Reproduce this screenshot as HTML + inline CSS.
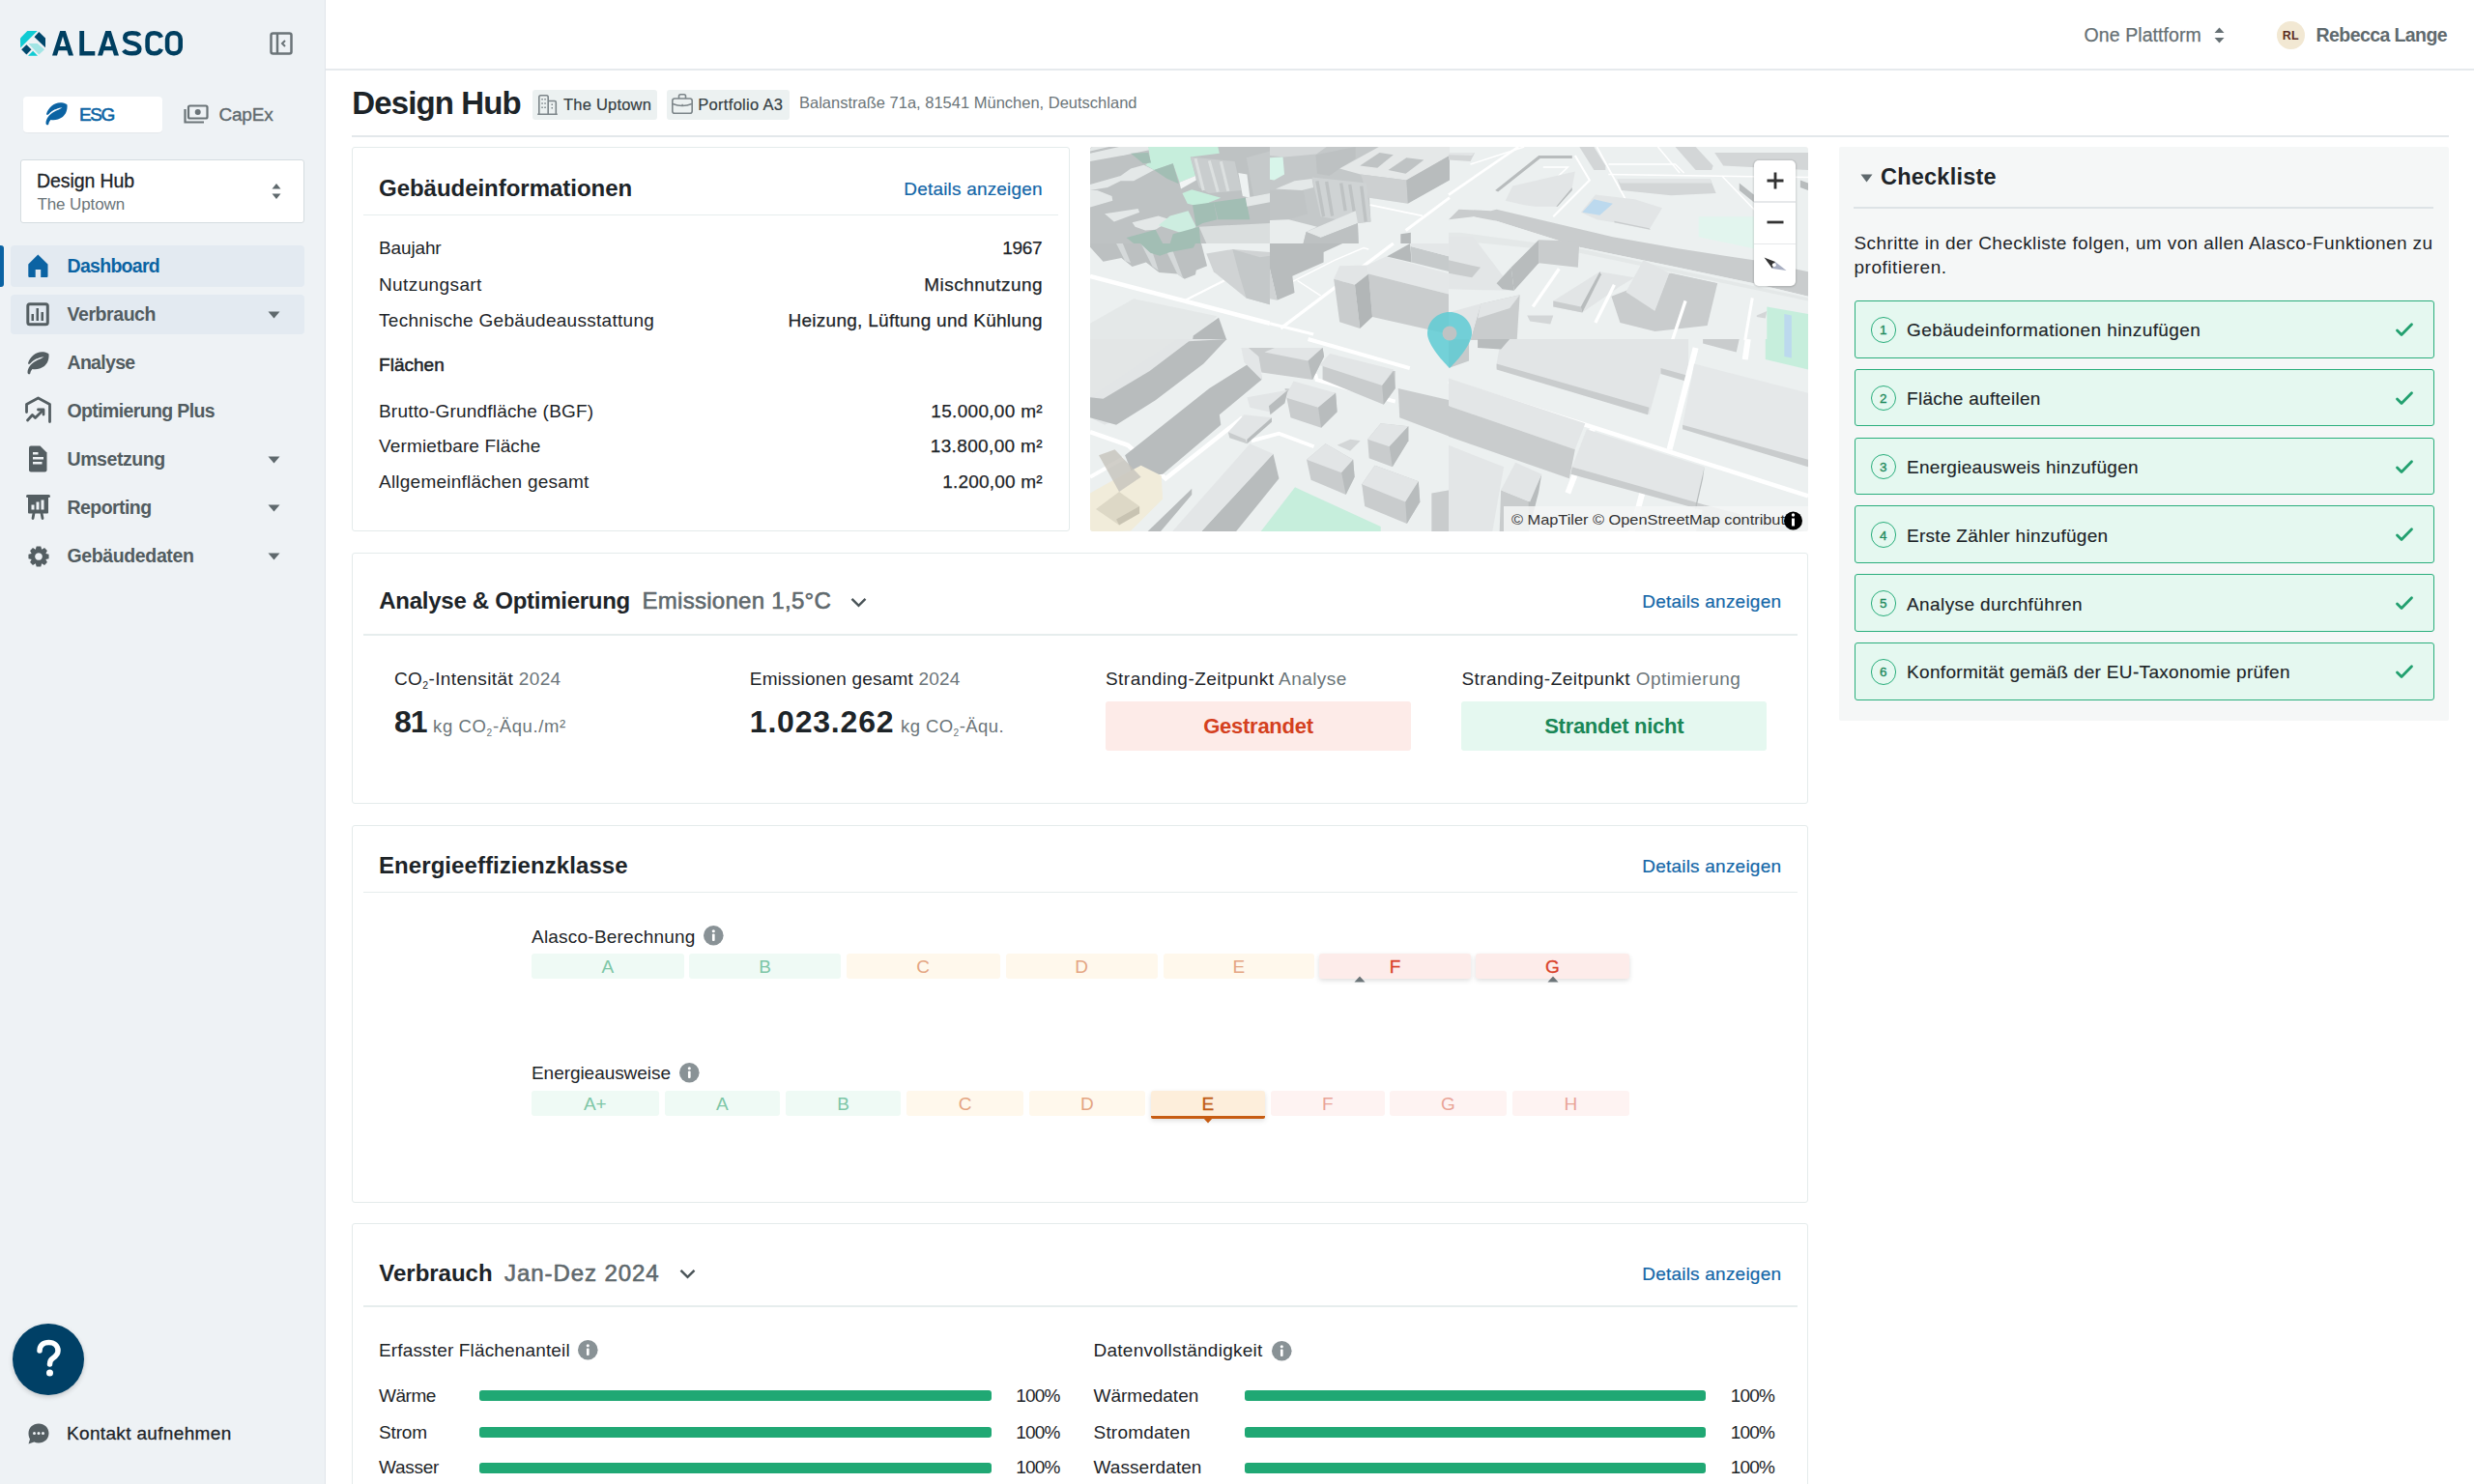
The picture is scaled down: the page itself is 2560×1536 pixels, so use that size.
<!DOCTYPE html>
<html><head><meta charset="utf-8"><style>
html,body{margin:0;padding:0;}
body{width:2560px;height:1536px;overflow:hidden;position:relative;background:#fff;font-family:"Liberation Sans",sans-serif;}
.t{position:absolute;line-height:1;white-space:nowrap;}
svg{position:absolute;overflow:visible;}
sub{font-size:0.55em;vertical-align:-0.35em;line-height:0;}
</style></head><body>
<div style="position:absolute;left:0px;top:0px;width:337px;height:1536px;background:#EEF2F5;border-right:1px solid #E1E6EA;box-sizing:border-box;"></div>
<svg style="left:21px;top:32px" width="26" height="26" viewBox="0 0 26 26">
<polygon points="0,7.5 7.3,0 17.7,0 0.2,17.5" fill="#10CBD3"/>
<polygon points="19.3,1 26,7.6 26,17.3 14.5,6.2" fill="#00486C"/>
<polygon points="8.3,13.1 17.7,13.1 25,19.3 19.3,24.5" fill="#A2E5E5"/>
<polygon points="6.4,14.2 11.5,19.3 6.4,24.4 1.2,19.3" fill="#00486C"/>
<polygon points="13.1,20.8 18,25.8 8,25.8" fill="#10CBD3"/>
</svg>
<svg style="left:54px;top:32px" width="136" height="26" viewBox="0 0 136 26"><g fill="#003F60" fill-rule="evenodd"><path d="M0 25.5 L8.2 0 H13.8 L22 25.5 H17 L15.4 20.3 H6.6 L5 25.5 Z M7.9 16 H14.1 L11 5.8 Z"/><path d="M47 25.5 L55.2 0 H60.8 L69 25.5 H64 L62.4 20.3 H53.6 L52 25.5 Z M54.9 16 H61.1 L58 5.8 Z"/><path d="M28.3 0 H33.1 V21 H44.3 V25.5 H28.3 Z"/></g><g fill="none" stroke="#003F60" stroke-width="4.6"><path d="M90.2 5 C88.8 2.2 86 2.3 82.5 2.3 C78.5 2.3 75.3 3.8 75.3 7.2 C75.3 10.6 78.3 11.6 82.5 12.6 C87.2 13.7 90.3 15 90.3 18.8 C90.3 22.5 87.2 23.3 82.5 23.3 C78.5 23.3 75.8 22.6 74 20"/><path d="M112.8 6.8 C111.6 3.4 109.2 2.3 105.6 2.3 C100.8 2.3 98.6 4.5 98.6 9 V16.6 C98.6 21.1 100.8 23.3 105.6 23.3 C109.2 23.3 111.6 22.1 112.8 18.7"/><rect x="119.1" y="2.3" width="13.6" height="21" rx="6.2"/></g></svg>
<svg style="left:279px;top:33px" width="25" height="24" viewBox="0 0 25 24"><rect x="1.5" y="1.5" width="21" height="21" rx="2" fill="none" stroke="#6B7478" stroke-width="2.5"/><line x1="8" y1="2" x2="8" y2="22" stroke="#6B7478" stroke-width="2.5"/><polyline points="16,9 13,12 16,15" fill="none" stroke="#6B7478" stroke-width="2"/></svg>
<div style="position:absolute;left:24px;top:100px;width:144px;height:37px;background:#fff;border-radius:4px;box-shadow:0 1px 1px rgba(0,0,0,0.04);"></div>
<svg style="left:45.5px;top:106px" width="25" height="25" viewBox="0 0 25 25"><path d="M1.5 21.5 C1.5 17 5 12.5 9.5 10 C13 8 17 6.5 18.5 5.5 C15 5.5 9 7.5 6 10.5 C4 12.5 2.8 14 2 12 C4 5.5 9.5 0.5 16.5 0.3 C20 0.2 23.5 2 23.5 2.5 C24 8 22 15 14 17.5 C11.5 18.3 9 18.5 6.5 18 C5 19.5 4.5 21 4.3 22.5 C4 24 1.5 23.5 1.5 21.5 Z" fill="#0B63A3"/></svg>
<div id="t0" class="t" style="top:109.4px;font-size:19px;color:#0B63A3;letter-spacing:-1.38px;-webkit-text-stroke:0.55px #0B63A3;left:82.0px;">ESG</div>
<svg style="left:190px;top:108px" width="26" height="20" viewBox="0 0 26 20"><rect x="5" y="1.5" width="19.5" height="13" rx="1.5" fill="none" stroke="#6B7478" stroke-width="2.2"/><circle cx="14.7" cy="8" r="3" fill="#6B7478"/><path d="M1.5 5 V18.5 H21" fill="none" stroke="#6B7478" stroke-width="2.2"/></svg>
<div id="t1" class="t" style="top:109.4px;font-size:19px;color:#5F696D;letter-spacing:-0.21px;-webkit-text-stroke:0.35px #5F696D;left:226.5px;">CapEx</div>
<div style="position:absolute;left:21px;top:165px;width:294px;height:66px;background:#fff;border:1px solid #D5DCE0;border-radius:3px;box-sizing:border-box;"></div>
<div id="t2" class="t" style="top:177.5px;font-size:19.5px;color:#1D2428;letter-spacing:-0.09px;-webkit-text-stroke:0.3px #1D2428;left:38.0px;">Design Hub</div>
<div id="t3" class="t" style="top:202.6px;font-size:17px;color:#6B7579;letter-spacing:-0.11px;left:38.5px;">The Uptown</div>
<svg style="left:281px;top:189px" width="10" height="18" viewBox="0 0 10 18"><polygon points="5,1 9.5,6.5 0.5,6.5" fill="#5F696D"/><polygon points="5,17 9.5,11.5 0.5,11.5" fill="#5F696D"/></svg>
<div style="position:absolute;left:11px;top:254px;width:304px;height:43px;background:#E3EAF1;border-radius:4px;"></div>
<div style="position:absolute;left:0px;top:254px;width:4px;height:43px;background:#0B63A3;border-radius:0 3px 3px 0;"></div>
<div style="position:absolute;left:11px;top:305px;width:304px;height:41px;background:#E3EAF1;border-radius:4px;"></div>
<div id="t4" class="t" style="top:265.5px;font-size:19.5px;color:#0B63A3;font-weight:700;letter-spacing:-0.7px;left:69.5px;">Dashboard</div>
<div id="t5" class="t" style="top:315.5px;font-size:19.5px;color:#525C60;font-weight:700;letter-spacing:-0.43px;left:69.5px;">Verbrauch</div>
<div id="t6" class="t" style="top:365.5px;font-size:19.5px;color:#525C60;font-weight:700;letter-spacing:-0.69px;left:69.5px;">Analyse</div>
<div id="t7" class="t" style="top:415.5px;font-size:19.5px;color:#525C60;font-weight:700;letter-spacing:-0.63px;left:69.5px;">Optimierung Plus</div>
<div id="t8" class="t" style="top:465.5px;font-size:19.5px;color:#525C60;font-weight:700;letter-spacing:-0.43px;left:69.5px;">Umsetzung</div>
<div id="t9" class="t" style="top:515.5px;font-size:19.5px;color:#525C60;font-weight:700;letter-spacing:-0.56px;left:69.5px;">Reporting</div>
<div id="t10" class="t" style="top:565.5px;font-size:19.5px;color:#525C60;font-weight:700;letter-spacing:-0.37px;left:69.5px;">Gebäudedaten</div>
<svg style="left:277px;top:322px" width="13" height="8" viewBox="0 0 13 8"><polygon points="0.5,0.5 12.5,0.5 6.5,7.5" fill="#5F696D"/></svg>
<svg style="left:277px;top:472px" width="13" height="8" viewBox="0 0 13 8"><polygon points="0.5,0.5 12.5,0.5 6.5,7.5" fill="#5F696D"/></svg>
<svg style="left:277px;top:522px" width="13" height="8" viewBox="0 0 13 8"><polygon points="0.5,0.5 12.5,0.5 6.5,7.5" fill="#5F696D"/></svg>
<svg style="left:277px;top:572px" width="13" height="8" viewBox="0 0 13 8"><polygon points="0.5,0.5 12.5,0.5 6.5,7.5" fill="#5F696D"/></svg>
<svg style="left:29px;top:263px" width="21" height="24" viewBox="0 0 21 24"><path d="M10.3 0.5 L20.5 10.5 V23 Q20.5 24 19.5 24 H13.2 V16 H7.7 V24 H1.5 Q0.3 24 0.3 23 V10.5 Z" fill="#0B63A3"/></svg>
<svg style="left:27px;top:313px" width="25" height="25" viewBox="0 0 25 25"><rect x="1.8" y="1.8" width="20.5" height="21" rx="2" fill="none" stroke="#545E62" stroke-width="3"/><rect x="5.5" y="12" width="2.5" height="7" fill="#545E62"/><rect x="10.5" y="6" width="2.5" height="13" fill="#545E62"/><rect x="15.5" y="10" width="2.5" height="9" fill="#545E62"/></svg>
<svg style="left:27px;top:364px" width="25" height="25" viewBox="0 0 25 25"><path d="M1.5 21.5 C1.5 17 5 12.5 9.5 10 C13 8 17 6.5 18.5 5.5 C15 5.5 9 7.5 6 10.5 C4 12.5 2.8 14 2 12 C4 5.5 9.5 0.5 16.5 0.3 C20 0.2 23.5 2 23.5 2.5 C24 8 22 15 14 17.5 C11.5 18.3 9 18.5 6.5 18 C5 19.5 4.5 21 4.3 22.5 C4 24 1.5 23.5 1.5 21.5 Z" fill="#545E62"/></svg>
<svg style="left:26px;top:411px" width="28" height="28" viewBox="0 0 28 28"><polyline points="1.5,15.5 1.5,7.5 13.5,1 25.5,7.5 25.5,25.5" fill="none" stroke="#545E62" stroke-width="2.8" stroke-linecap="round" stroke-linejoin="round"/><polyline points="2.5,24 7.5,18.5 10.5,21.5 18,14" fill="none" stroke="#545E62" stroke-width="2.8" stroke-linecap="round" stroke-linejoin="round"/><polyline points="13.5,13 19,13 19,18" fill="none" stroke="#545E62" stroke-width="2.8" stroke-linecap="round" stroke-linejoin="round"/></svg>
<svg style="left:30px;top:461px" width="19" height="28" viewBox="0 0 19 28"><path d="M2 0.5 H11.5 L18.5 7.5 V25.5 Q18.5 27.5 16.5 27.5 H2 Q0 27.5 0 25.5 V2.5 Q0 0.5 2 0.5 Z" fill="#545E62"/><rect x="4" y="7" width="5.5" height="2.5" fill="#EEF2F5"/><rect x="4" y="12" width="11" height="2.5" fill="#EEF2F5"/><rect x="4" y="17" width="9.5" height="2.5" fill="#EEF2F5"/></svg>
<svg style="left:27px;top:512px" width="26" height="26" viewBox="0 0 26 26"><rect x="0" y="0" width="25" height="3" rx="1.5" fill="#545E62"/><rect x="2" y="1" width="21" height="18.5" rx="1" fill="#545E62"/><rect x="5.5" y="10.5" width="3" height="5" fill="#EEF2F5"/><rect x="10.5" y="7.5" width="3" height="8" fill="#EEF2F5"/><rect x="15.5" y="5.5" width="3" height="10" fill="#EEF2F5"/><path d="M8 19 L7 24.5 M16 19 L17 24.5" stroke="#545E62" stroke-width="2.8" stroke-linecap="round"/></svg>
<svg style="left:28.5px;top:564.5px" width="22" height="22" viewBox="0 0 24 24"><path fill="#545E62" fill-rule="evenodd" d="M9.5 0.5 H14.5 L15.5 4 L18.6 2.3 L21.7 5.4 L20 8.6 L23.5 9.5 V14.5 L20 15.4 L21.7 18.6 L18.6 21.7 L15.5 20 L14.5 23.5 H9.5 L8.5 20 L5.4 21.7 L2.3 18.6 L4 15.4 L0.5 14.5 V9.5 L4 8.6 L2.3 5.4 L5.4 2.3 L8.5 4 Z M12 7.8 A4.2 4.2 0 1 0 12.001 7.8 Z"/></svg>
<div style="position:absolute;left:13px;top:1370px;width:74px;height:74px;border-radius:50%;background:#004066;box-shadow:0 2px 5px rgba(0,0,0,0.18);"></div>
<svg style="left:37px;top:1388px" width="27" height="38" viewBox="0 0 27 38"><path d="M4 10 C4 4.5 8 1.5 13.5 1.5 C19 1.5 23 5 23 10 C23 14 20.5 16 17.5 18 C15.3 19.5 14.5 21 14.5 24" fill="none" stroke="#fff" stroke-width="5.5" stroke-linecap="round"/><circle cx="14.5" cy="33" r="3.5" fill="#fff"/></svg>
<svg style="left:28.5px;top:1473px" width="22" height="22" viewBox="0 0 22 22"><path d="M11 0.5 C17 0.5 21.5 4.7 21.5 10.5 C21.5 16.3 17 20.5 11 20.5 C9.3 20.5 7.7 20.2 6.3 19.6 L0.5 21.5 L2 16.5 C1 14.9 0.5 12.8 0.5 10.5 C0.5 4.7 5 0.5 11 0.5 Z" fill="#545E62"/><circle cx="6.5" cy="10.5" r="1.5" fill="#EEF2F5"/><circle cx="11" cy="10.5" r="1.5" fill="#EEF2F5"/><circle cx="15.5" cy="10.5" r="1.5" fill="#EEF2F5"/></svg>
<div id="t11" class="t" style="top:1474.4px;font-size:19px;color:#1D2428;letter-spacing:0.34px;-webkit-text-stroke:0.3px #1D2428;left:69.0px;">Kontakt aufnehmen</div>
<div style="position:absolute;left:337px;top:71px;width:2223px;height:2px;background:#E6EAED;"></div>
<div id="t12" class="t" style="top:26.5px;font-size:19.5px;color:#667074;letter-spacing:0.08px;-webkit-text-stroke:0.25px #667074;left:2156.6px;">One Plattform</div>
<svg style="left:2291px;top:28px" width="11" height="17" viewBox="0 0 11 17"><polygon points="5.5,0.5 10.5,6 0.5,6" fill="#667074"/><polygon points="5.5,16.5 10.5,11 0.5,11" fill="#667074"/></svg>
<div style="position:absolute;left:2356px;top:22px;width:28.5px;height:29px;border-radius:50%;background:#F2E8D3;"></div>
<div id="t13" class="t" style="top:30.6px;font-size:12.5px;color:#5B2B1F;font-weight:700;left:2370.2px;transform:translateX(-50%);">RL</div>
<div id="t14" class="t" style="top:26.5px;font-size:19.5px;color:#5F6A6E;font-weight:700;letter-spacing:-0.59px;left:2396.6px;">Rebecca Lange</div>
<div id="t15" class="t" style="top:90.1px;font-size:33px;color:#1D2428;font-weight:700;letter-spacing:-0.88px;left:364.3px;">Design Hub</div>
<div style="position:absolute;left:551px;top:93px;width:129px;height:31px;background:#ECF1F1;border-radius:3px;"></div>
<svg style="left:556px;top:98px" width="21" height="21" viewBox="0 0 21 21"><path d="M1.8 20 V2.5 Q1.8 0.8 3.5 0.8 H9.5 Q11.2 0.8 11.2 2.5 V20 M11.2 6.5 H18 Q19.3 6.5 19.3 8 V20 M0.2 20.2 H20.8" fill="none" stroke="#7C8589" stroke-width="1.6"/><g fill="#7C8589"><rect x="4.3" y="4" width="1.5" height="1.5"/><rect x="7.3" y="4" width="1.5" height="1.5"/><rect x="4.3" y="8.3" width="1.5" height="1.5"/><rect x="7.3" y="8.3" width="1.5" height="1.5"/><rect x="4.3" y="12.5" width="1.5" height="1.5"/><rect x="7.3" y="12.5" width="1.5" height="1.5"/><rect x="14.5" y="9.5" width="1.5" height="1.5"/><rect x="14.5" y="13" width="1.5" height="1.5"/></g></svg>
<div id="t16" class="t" style="top:100.0px;font-size:16.5px;color:#353E42;letter-spacing:0.2px;-webkit-text-stroke:0.2px #353E42;left:583.1px;">The Uptown</div>
<div style="position:absolute;left:690px;top:93px;width:126.5px;height:31px;background:#ECF1F1;border-radius:3px;"></div>
<svg style="left:695px;top:97px" width="22" height="21" viewBox="0 0 22 21"><rect x="0.8" y="5" width="20.4" height="15.2" rx="2.3" fill="none" stroke="#7C8589" stroke-width="1.6"/><path d="M7.5 5 V2.5 Q7.5 0.8 9.2 0.8 H12.8 Q14.5 0.8 14.5 2.5 V5" fill="none" stroke="#7C8589" stroke-width="1.6"/><path d="M1 10.5 Q11 14.5 21 10.5" fill="none" stroke="#7C8589" stroke-width="1.6"/><rect x="10.4" y="10.8" width="1.4" height="1.4" fill="#7C8589"/></svg>
<div id="t17" class="t" style="top:100.0px;font-size:16.5px;color:#353E42;letter-spacing:0.3px;-webkit-text-stroke:0.2px #353E42;left:722.3px;">Portfolio A3</div>
<div id="t18" class="t" style="top:98.0px;font-size:16.5px;color:#6B7579;letter-spacing:0.0px;left:827.0px;">Balanstraße 71a, 81541 München, Deutschland</div>
<div style="position:absolute;left:364px;top:140px;width:2170px;height:2px;background:#E3E8EB;"></div>
<div style="position:absolute;left:364px;top:152px;width:743px;height:398px;border:1px solid #E4EBEB;border-radius:3px;box-sizing:border-box;"></div>
<div id="t19" class="t" style="top:183.2px;font-size:24px;color:#1D2428;font-weight:700;letter-spacing:-0.03px;left:392.0px;">Gebäudeinformationen</div>
<div id="t20" class="t" style="top:186.4px;font-size:19px;color:#1467A8;letter-spacing:0.19px;-webkit-text-stroke:0.2px #1467A8;right:1481.2px;">Details anzeigen</div>
<div style="position:absolute;left:376px;top:221.5px;width:719px;height:1.5px;background:#E6EDED;"></div>
<div id="t21" class="t" style="top:247.2px;font-size:19px;color:#1D2428;letter-spacing:-0.14px;left:392.0px;">Baujahr</div>
<div id="t22" class="t" style="top:247.2px;font-size:19px;color:#1D2428;letter-spacing:-0.32px;-webkit-text-stroke:0.25px #1D2428;right:1481.7px;">1967</div>
<div id="t23" class="t" style="top:284.6px;font-size:19px;color:#1D2428;letter-spacing:0.39px;left:392.0px;">Nutzungsart</div>
<div id="t24" class="t" style="top:284.6px;font-size:19px;color:#1D2428;letter-spacing:0.47px;-webkit-text-stroke:0.25px #1D2428;right:1480.9px;">Mischnutzung</div>
<div id="t25" class="t" style="top:321.7px;font-size:19px;color:#1D2428;letter-spacing:0.29px;left:392.0px;">Technische Gebäudeausstattung</div>
<div id="t26" class="t" style="top:321.7px;font-size:19px;color:#1D2428;letter-spacing:0.28px;-webkit-text-stroke:0.25px #1D2428;right:1481.1px;">Heizung, Lüftung und Kühlung</div>
<div id="t27" class="t" style="top:415.8px;font-size:19px;color:#1D2428;letter-spacing:0.2px;left:392.0px;">Brutto-Grundfläche (BGF)</div>
<div id="t28" class="t" style="top:415.8px;font-size:19px;color:#1D2428;letter-spacing:0.3px;-webkit-text-stroke:0.25px #1D2428;right:1481.1px;">15.000,00 m²</div>
<div id="t29" class="t" style="top:452.2px;font-size:19px;color:#1D2428;letter-spacing:0.15px;left:392.0px;">Vermietbare Fläche</div>
<div id="t30" class="t" style="top:452.2px;font-size:19px;color:#1D2428;letter-spacing:0.36px;-webkit-text-stroke:0.25px #1D2428;right:1481.0px;">13.800,00 m²</div>
<div id="t31" class="t" style="top:489.1px;font-size:19px;color:#1D2428;letter-spacing:0.23px;left:392.0px;">Allgemeinflächen gesamt</div>
<div id="t32" class="t" style="top:489.1px;font-size:19px;color:#1D2428;letter-spacing:0.2px;-webkit-text-stroke:0.25px #1D2428;right:1481.2px;">1.200,00 m²</div>
<div id="t33" class="t" style="top:367.9px;font-size:19px;color:#1D2428;letter-spacing:0.03px;-webkit-text-stroke:0.5px #1D2428;left:392.0px;">Flächen</div>
<div style="position:absolute;left:1903px;top:152px;width:631px;height:594px;background:#F5F7F7;border-radius:2px;"></div>
<svg style="left:1925px;top:180px" width="13" height="9" viewBox="0 0 13 9"><polygon points="0.5,0.5 12.5,0.5 6.5,8.5" fill="#5F696D"/></svg>
<div id="t34" class="t" style="top:171.8px;font-size:23.5px;color:#1D2428;font-weight:700;letter-spacing:0.22px;left:1946.0px;">Checkliste</div>
<div style="position:absolute;left:1918px;top:214px;width:600px;height:2px;background:#DDE3E6;"></div>
<div id="t35" class="t" style="top:241.5px;font-size:19px;color:#1D2428;letter-spacing:0.39px;left:1918.5px;">Schritte in der Checkliste folgen, um von allen Alasco-Funktionen zu</div>
<div id="t36" class="t" style="top:267.4px;font-size:19px;color:#1D2428;letter-spacing:0.53px;left:1918.5px;">profitieren.</div>
<div style="position:absolute;left:1918.5px;top:311.0px;width:600.0px;height:59.5px;background:#E5F8F0;border:1.8px solid #2AAE7C;border-radius:3px;box-sizing:border-box;"></div>
<div style="position:absolute;left:1935.5px;top:328.0px;width:26.5px;height:26.5px;border:1.8px solid #2AAE7C;border-radius:50%;box-sizing:border-box;"></div>
<div id="t37" class="t" style="top:335.1px;font-size:13.5px;color:#1E8A5C;-webkit-text-stroke:0.35px #1E8A5C;left:1948.8px;transform:translateX(-50%);">1</div>
<div id="t38" class="t" style="top:332.3px;font-size:19px;color:#1D2428;letter-spacing:0.41px;-webkit-text-stroke:0.15px #1D2428;left:1973.0px;">Gebäudeinformationen hinzufügen</div>
<svg style="left:2479px;top:334.0px" width="18" height="15" viewBox="0 0 18 15"><polyline points="1.5,8 6,12.5 16.5,1.8" fill="none" stroke="#22A06F" stroke-width="2.8" stroke-linecap="round" stroke-linejoin="round"/></svg>
<div style="position:absolute;left:1918.5px;top:381.8px;width:600.0px;height:59.5px;background:#E5F8F0;border:1.8px solid #2AAE7C;border-radius:3px;box-sizing:border-box;"></div>
<div style="position:absolute;left:1935.5px;top:398.8px;width:26.5px;height:26.5px;border:1.8px solid #2AAE7C;border-radius:50%;box-sizing:border-box;"></div>
<div id="t39" class="t" style="top:405.9px;font-size:13.5px;color:#1E8A5C;-webkit-text-stroke:0.35px #1E8A5C;left:1948.8px;transform:translateX(-50%);">2</div>
<div id="t40" class="t" style="top:403.1px;font-size:19px;color:#1D2428;letter-spacing:0.28px;-webkit-text-stroke:0.15px #1D2428;left:1973.0px;">Fläche aufteilen</div>
<svg style="left:2479px;top:404.8px" width="18" height="15" viewBox="0 0 18 15"><polyline points="1.5,8 6,12.5 16.5,1.8" fill="none" stroke="#22A06F" stroke-width="2.8" stroke-linecap="round" stroke-linejoin="round"/></svg>
<div style="position:absolute;left:1918.5px;top:452.6px;width:600.0px;height:59.5px;background:#E5F8F0;border:1.8px solid #2AAE7C;border-radius:3px;box-sizing:border-box;"></div>
<div style="position:absolute;left:1935.5px;top:469.6px;width:26.5px;height:26.5px;border:1.8px solid #2AAE7C;border-radius:50%;box-sizing:border-box;"></div>
<div id="t41" class="t" style="top:476.7px;font-size:13.5px;color:#1E8A5C;-webkit-text-stroke:0.35px #1E8A5C;left:1948.8px;transform:translateX(-50%);">3</div>
<div id="t42" class="t" style="top:473.9px;font-size:19px;color:#1D2428;letter-spacing:0.3px;-webkit-text-stroke:0.15px #1D2428;left:1973.0px;">Energieausweis hinzufügen</div>
<svg style="left:2479px;top:475.6px" width="18" height="15" viewBox="0 0 18 15"><polyline points="1.5,8 6,12.5 16.5,1.8" fill="none" stroke="#22A06F" stroke-width="2.8" stroke-linecap="round" stroke-linejoin="round"/></svg>
<div style="position:absolute;left:1918.5px;top:523.4px;width:600.0px;height:59.5px;background:#E5F8F0;border:1.8px solid #2AAE7C;border-radius:3px;box-sizing:border-box;"></div>
<div style="position:absolute;left:1935.5px;top:540.4px;width:26.5px;height:26.5px;border:1.8px solid #2AAE7C;border-radius:50%;box-sizing:border-box;"></div>
<div id="t43" class="t" style="top:547.5px;font-size:13.5px;color:#1E8A5C;-webkit-text-stroke:0.35px #1E8A5C;left:1948.8px;transform:translateX(-50%);">4</div>
<div id="t44" class="t" style="top:544.7px;font-size:19px;color:#1D2428;letter-spacing:0.29px;-webkit-text-stroke:0.15px #1D2428;left:1973.0px;">Erste Zähler hinzufügen</div>
<svg style="left:2479px;top:546.4px" width="18" height="15" viewBox="0 0 18 15"><polyline points="1.5,8 6,12.5 16.5,1.8" fill="none" stroke="#22A06F" stroke-width="2.8" stroke-linecap="round" stroke-linejoin="round"/></svg>
<div style="position:absolute;left:1918.5px;top:594.2px;width:600.0px;height:59.5px;background:#E5F8F0;border:1.8px solid #2AAE7C;border-radius:3px;box-sizing:border-box;"></div>
<div style="position:absolute;left:1935.5px;top:611.2px;width:26.5px;height:26.5px;border:1.8px solid #2AAE7C;border-radius:50%;box-sizing:border-box;"></div>
<div id="t45" class="t" style="top:618.3px;font-size:13.5px;color:#1E8A5C;-webkit-text-stroke:0.35px #1E8A5C;left:1948.8px;transform:translateX(-50%);">5</div>
<div id="t46" class="t" style="top:615.5px;font-size:19px;color:#1D2428;letter-spacing:0.4px;-webkit-text-stroke:0.15px #1D2428;left:1973.0px;">Analyse durchführen</div>
<svg style="left:2479px;top:617.2px" width="18" height="15" viewBox="0 0 18 15"><polyline points="1.5,8 6,12.5 16.5,1.8" fill="none" stroke="#22A06F" stroke-width="2.8" stroke-linecap="round" stroke-linejoin="round"/></svg>
<div style="position:absolute;left:1918.5px;top:665.0px;width:600.0px;height:59.5px;background:#E5F8F0;border:1.8px solid #2AAE7C;border-radius:3px;box-sizing:border-box;"></div>
<div style="position:absolute;left:1935.5px;top:682.0px;width:26.5px;height:26.5px;border:1.8px solid #2AAE7C;border-radius:50%;box-sizing:border-box;"></div>
<div id="t47" class="t" style="top:689.1px;font-size:13.5px;color:#1E8A5C;-webkit-text-stroke:0.35px #1E8A5C;left:1948.8px;transform:translateX(-50%);">6</div>
<div id="t48" class="t" style="top:686.3px;font-size:19px;color:#1D2428;letter-spacing:0.33px;-webkit-text-stroke:0.15px #1D2428;left:1973.0px;">Konformität gemäß der EU-Taxonomie prüfen</div>
<svg style="left:2479px;top:688.0px" width="18" height="15" viewBox="0 0 18 15"><polyline points="1.5,8 6,12.5 16.5,1.8" fill="none" stroke="#22A06F" stroke-width="2.8" stroke-linecap="round" stroke-linejoin="round"/></svg>
<div style="position:absolute;left:364px;top:571.5px;width:1507px;height:260.0px;border:1px solid #E4EBEB;border-radius:3px;box-sizing:border-box;"></div>
<div id="t49" class="t" style="top:610.4px;font-size:24px;color:#1D2428;font-weight:700;letter-spacing:-0.27px;left:392.3px;">Analyse &amp; Optimierung</div>
<div id="t50" class="t" style="top:610.4px;font-size:24px;color:#5F696D;font-weight:700;letter-spacing:0.28px;left:664.5px;font-weight:400;-webkit-text-stroke:0.6px #5F696D;">Emissionen 1,5°C</div>
<svg style="left:879.5px;top:617.5px" width="17" height="11" viewBox="0 0 17 11"><polyline points="1.5,1.8 8.5,8.8 15.5,1.8" fill="none" stroke="#4A5458" stroke-width="2.4"/></svg>
<div id="t51" class="t" style="top:612.9px;font-size:19px;color:#1467A8;letter-spacing:0.22px;-webkit-text-stroke:0.2px #1467A8;right:716.8px;">Details anzeigen</div>
<div style="position:absolute;left:376px;top:656px;width:1484px;height:1.5px;background:#E6EDED;"></div>
<div id="t52" class="t" style="top:692.9px;font-size:19px;color:#1D2428;letter-spacing:0.38px;left:408.0px;">CO<sub>2</sub>-Intensität <span style="color:#6B7579">2024</span></div>
<div id="t53" class="t" style="top:731.4px;font-size:32px;color:#1D2428;font-weight:700;letter-spacing:-1.1px;left:408.0px;">81</div>
<div id="t54" class="t" style="top:742.8px;font-size:18.5px;color:#6B7579;letter-spacing:0.63px;left:448.0px;">kg CO<sub>2</sub>-Äqu./m²</div>
<div id="t55" class="t" style="top:692.9px;font-size:19px;color:#1D2428;letter-spacing:0.2px;left:775.8px;">Emissionen gesamt <span style="color:#6B7579">2024</span></div>
<div id="t56" class="t" style="top:731.4px;font-size:32px;color:#1D2428;font-weight:700;letter-spacing:0.8px;left:775.8px;">1.023.262</div>
<div id="t57" class="t" style="top:742.8px;font-size:18.5px;color:#6B7579;letter-spacing:0.43px;left:932.0px;">kg CO<sub>2</sub>-Äqu.</div>
<div id="t58" class="t" style="top:692.6px;font-size:19px;color:#1D2428;letter-spacing:0.45px;left:1144.0px;">Stranding-Zeitpunkt <span style="color:#6B7579">Analyse</span></div>
<div style="position:absolute;left:1144px;top:725.7px;width:316px;height:51.799999999999955px;background:#FDEBE8;border-radius:3px;"></div>
<div id="t59" class="t" style="top:741.2px;font-size:22px;color:#D4401E;font-weight:700;letter-spacing:-0.27px;left:1302.0px;transform:translateX(-50%);">Gestrandet</div>
<div id="t60" class="t" style="top:692.6px;font-size:19px;color:#1D2428;letter-spacing:0.46px;left:1512.4px;">Stranding-Zeitpunkt <span style="color:#6B7579">Optimierung</span></div>
<div style="position:absolute;left:1512.4px;top:725.7px;width:315.5999999999999px;height:51.799999999999955px;background:#E5F8F0;border-radius:3px;"></div>
<div id="t61" class="t" style="top:741.2px;font-size:22px;color:#1A8757;font-weight:700;letter-spacing:-0.28px;left:1670.2px;transform:translateX(-50%);">Strandet nicht</div>
<div style="position:absolute;left:364px;top:853.5px;width:1507px;height:391.0px;border:1px solid #E4EBEB;border-radius:3px;box-sizing:border-box;"></div>
<div id="t62" class="t" style="top:884.4px;font-size:24px;color:#1D2428;font-weight:700;letter-spacing:0.07px;left:392.0px;">Energieeffizienzklasse</div>
<div id="t63" class="t" style="top:886.9px;font-size:19px;color:#1467A8;letter-spacing:0.22px;-webkit-text-stroke:0.2px #1467A8;right:716.8px;">Details anzeigen</div>
<div style="position:absolute;left:376px;top:922.5px;width:1484px;height:1.5px;background:#E6EDED;"></div>
<div id="t64" class="t" style="top:959.5px;font-size:19px;color:#1D2428;letter-spacing:0.22px;left:550.0px;">Alasco-Berechnung</div>
<svg style="left:728.4000000000001px;top:957.7px" width="20.6" height="20.6" viewBox="0 0 20 20"><circle cx="10" cy="10" r="10" fill="#899296"/><circle cx="10" cy="5.6" r="1.5" fill="#fff"/><rect x="8.7" y="8.3" width="2.6" height="7.2" rx="1" fill="#fff"/></svg>
<div id="t65" class="t" style="top:1100.9px;font-size:19px;color:#1D2428;letter-spacing:-0.05px;left:550.0px;">Energieausweise</div>
<svg style="left:703.2px;top:1099.7px" width="20.6" height="20.6" viewBox="0 0 20 20"><circle cx="10" cy="10" r="10" fill="#899296"/><circle cx="10" cy="5.6" r="1.5" fill="#fff"/><rect x="8.7" y="8.3" width="2.6" height="7.2" rx="1" fill="#fff"/></svg>
<div style="position:absolute;left:550px;top:987px;width:157.60000000000002px;height:26px;background:#EFFAF5;border-radius:3px;"></div>
<div id="t66" class="t" style="top:991.4px;font-size:19px;color:#7DC6A6;left:628.8px;transform:translateX(-50%);">A</div>
<div style="position:absolute;left:713.3px;top:987px;width:156.70000000000005px;height:26px;background:#EFFAF5;border-radius:3px;"></div>
<div id="t67" class="t" style="top:991.4px;font-size:19px;color:#7DC6A6;left:791.6px;transform:translateX(-50%);">B</div>
<div style="position:absolute;left:876px;top:987px;width:158.5px;height:26px;background:#FFF8EC;border-radius:3px;"></div>
<div id="t68" class="t" style="top:991.4px;font-size:19px;color:#E4A582;left:955.2px;transform:translateX(-50%);">C</div>
<div style="position:absolute;left:1040.5px;top:987px;width:157.20000000000005px;height:26px;background:#FFF8EC;border-radius:3px;"></div>
<div id="t69" class="t" style="top:991.4px;font-size:19px;color:#E4A582;left:1119.1px;transform:translateX(-50%);">D</div>
<div style="position:absolute;left:1204px;top:987px;width:155.5px;height:26px;background:#FFF8EC;border-radius:3px;"></div>
<div id="t70" class="t" style="top:991.4px;font-size:19px;color:#E4A582;left:1281.8px;transform:translateX(-50%);">E</div>
<div style="position:absolute;left:1365.4px;top:987px;width:156.39999999999986px;height:26px;background:#FDECEA;border-radius:3px;box-shadow:0 2px 5px rgba(0,0,0,0.13);"></div>
<div id="t71" class="t" style="top:991.4px;font-size:19px;color:#D9412A;left:1443.6px;transform:translateX(-50%);-webkit-text-stroke:0.3px #D9412A;">F</div>
<div style="position:absolute;left:1527px;top:987px;width:158.70000000000005px;height:26px;background:#FDECEA;border-radius:3px;box-shadow:0 2px 5px rgba(0,0,0,0.13);"></div>
<div id="t72" class="t" style="top:991.4px;font-size:19px;color:#D9412A;left:1606.3px;transform:translateX(-50%);-webkit-text-stroke:0.3px #D9412A;">G</div>
<svg style="left:1401.4px;top:1010px" width="12" height="7" viewBox="0 0 12 7"><polygon points="6,0.5 11.5,6.5 0.5,6.5" fill="#6B7478"/></svg>
<svg style="left:1600.6px;top:1010px" width="12" height="7" viewBox="0 0 12 7"><polygon points="6,0.5 11.5,6.5 0.5,6.5" fill="#6B7478"/></svg>
<div style="position:absolute;left:550px;top:1129px;width:131.60000000000002px;height:25.5px;background:#EFFAF5;border-radius:3px;"></div>
<div id="t73" class="t" style="top:1133.4px;font-size:19px;color:#7DC6A6;left:615.8px;transform:translateX(-50%);">A+</div>
<div style="position:absolute;left:687.5px;top:1129px;width:119.70000000000005px;height:25.5px;background:#EFFAF5;border-radius:3px;"></div>
<div id="t74" class="t" style="top:1133.4px;font-size:19px;color:#7DC6A6;left:747.4px;transform:translateX(-50%);">A</div>
<div style="position:absolute;left:813.2px;top:1129px;width:118.79999999999995px;height:25.5px;background:#EFFAF5;border-radius:3px;"></div>
<div id="t75" class="t" style="top:1133.4px;font-size:19px;color:#7DC6A6;left:872.6px;transform:translateX(-50%);">B</div>
<div style="position:absolute;left:938px;top:1129px;width:121px;height:25.5px;background:#FFF8EC;border-radius:3px;"></div>
<div id="t76" class="t" style="top:1133.4px;font-size:19px;color:#E4A582;left:998.5px;transform:translateX(-50%);">C</div>
<div style="position:absolute;left:1065px;top:1129px;width:119.5px;height:25.5px;background:#FFF8EC;border-radius:3px;"></div>
<div id="t77" class="t" style="top:1133.4px;font-size:19px;color:#E4A582;left:1124.8px;transform:translateX(-50%);">D</div>
<div style="position:absolute;left:1190.5px;top:1129px;width:118.5px;height:29px;background:#FDEEDB;border-radius:3px 3px 2px 2px;border-bottom:3px solid #C75C12;box-sizing:border-box;box-shadow:0 2px 5px rgba(0,0,0,0.13);"></div>
<svg style="left:1243.75px;top:1156px" width="12" height="8" viewBox="0 0 12 8"><polygon points="0.5,0.5 11.5,0.5 6,6.5" fill="#C75C12"/></svg>
<div id="t78" class="t" style="top:1133.4px;font-size:19px;color:#C05A14;left:1249.8px;transform:translateX(-50%);-webkit-text-stroke:0.3px #C05A14;">E</div>
<div style="position:absolute;left:1315.3px;top:1129px;width:117.29999999999995px;height:25.5px;background:#FEF3F2;border-radius:3px;"></div>
<div id="t79" class="t" style="top:1133.4px;font-size:19px;color:#E9A397;left:1373.9px;transform:translateX(-50%);">F</div>
<div style="position:absolute;left:1438px;top:1129px;width:121px;height:25.5px;background:#FEF3F2;border-radius:3px;"></div>
<div id="t80" class="t" style="top:1133.4px;font-size:19px;color:#E9A397;left:1498.5px;transform:translateX(-50%);">G</div>
<div style="position:absolute;left:1565px;top:1129px;width:120.70000000000005px;height:25.5px;background:#FEF3F2;border-radius:3px;"></div>
<div id="t81" class="t" style="top:1133.4px;font-size:19px;color:#E9A397;left:1625.3px;transform:translateX(-50%);">H</div>
<div style="position:absolute;left:364px;top:1266px;width:1507px;height:334px;border:1px solid #E4EBEB;border-radius:3px;box-sizing:border-box;"></div>
<div id="t82" class="t" style="top:1305.7px;font-size:24px;color:#1D2428;font-weight:700;letter-spacing:-0.01px;left:392.3px;">Verbrauch</div>
<div id="t83" class="t" style="top:1305.7px;font-size:24px;color:#5F696D;font-weight:700;letter-spacing:0.93px;left:522.0px;font-weight:400;-webkit-text-stroke:0.6px #5F696D;">Jan-Dez 2024</div>
<svg style="left:702.5px;top:1313px" width="17" height="11" viewBox="0 0 17 11"><polyline points="1.5,1.8 8.5,8.8 15.5,1.8" fill="none" stroke="#4A5458" stroke-width="2.4"/></svg>
<div id="t84" class="t" style="top:1308.5px;font-size:19px;color:#1467A8;letter-spacing:0.22px;-webkit-text-stroke:0.2px #1467A8;right:716.8px;">Details anzeigen</div>
<div style="position:absolute;left:376px;top:1351px;width:1484px;height:1.5px;background:#E6EDED;"></div>
<div id="t85" class="t" style="top:1388.3px;font-size:19px;color:#1D2428;letter-spacing:0.15px;left:392.0px;">Erfasster Flächenanteil</div>
<svg style="left:598.2px;top:1387.2px" width="20.6" height="20.6" viewBox="0 0 20 20"><circle cx="10" cy="10" r="10" fill="#899296"/><circle cx="10" cy="5.6" r="1.5" fill="#fff"/><rect x="8.7" y="8.3" width="2.6" height="7.2" rx="1" fill="#fff"/></svg>
<div id="t86" class="t" style="top:1388.3px;font-size:19px;color:#1D2428;letter-spacing:0.25px;left:1131.5px;">Datenvollständigkeit</div>
<svg style="left:1315.9px;top:1387.5px" width="20.6" height="20.6" viewBox="0 0 20 20"><circle cx="10" cy="10" r="10" fill="#899296"/><circle cx="10" cy="5.6" r="1.5" fill="#fff"/><rect x="8.7" y="8.3" width="2.6" height="7.2" rx="1" fill="#fff"/></svg>
<div id="t87" class="t" style="top:1435.3px;font-size:19px;color:#1D2428;letter-spacing:-0.45px;left:392.0px;">Wärme</div>
<div style="position:absolute;left:496px;top:1439px;width:530px;height:11px;background:#20A874;border-radius:3px;"></div>
<div id="t88" class="t" style="top:1435.3px;font-size:19px;color:#1D2428;letter-spacing:-0.83px;right:1463.5px;">100%</div>
<div id="t89" class="t" style="top:1435.3px;font-size:19px;color:#1D2428;letter-spacing:0.0px;left:1131.5px;">Wärmedaten</div>
<div style="position:absolute;left:1288px;top:1439px;width:477px;height:11px;background:#20A874;border-radius:3px;"></div>
<div id="t90" class="t" style="top:1435.3px;font-size:19px;color:#1D2428;letter-spacing:-0.83px;right:724.0px;">100%</div>
<div id="t91" class="t" style="top:1472.9px;font-size:19px;color:#1D2428;letter-spacing:-0.14px;left:392.0px;">Strom</div>
<div style="position:absolute;left:496px;top:1476.6px;width:530px;height:11.0px;background:#20A874;border-radius:3px;"></div>
<div id="t92" class="t" style="top:1472.9px;font-size:19px;color:#1D2428;letter-spacing:-0.83px;right:1463.5px;">100%</div>
<div id="t93" class="t" style="top:1472.9px;font-size:19px;color:#1D2428;letter-spacing:0.21px;left:1131.5px;">Stromdaten</div>
<div style="position:absolute;left:1288px;top:1476.6px;width:477px;height:11.0px;background:#20A874;border-radius:3px;"></div>
<div id="t94" class="t" style="top:1472.9px;font-size:19px;color:#1D2428;letter-spacing:-0.83px;right:724.0px;">100%</div>
<div id="t95" class="t" style="top:1508.7px;font-size:19px;color:#1D2428;letter-spacing:-0.28px;left:392.0px;">Wasser</div>
<div style="position:absolute;left:496px;top:1513.5px;width:530px;height:11.0px;background:#20A874;border-radius:3px;"></div>
<div id="t96" class="t" style="top:1508.7px;font-size:19px;color:#1D2428;letter-spacing:-0.83px;right:1463.5px;">100%</div>
<div id="t97" class="t" style="top:1508.7px;font-size:19px;color:#1D2428;letter-spacing:0.07px;left:1131.5px;">Wasserdaten</div>
<div style="position:absolute;left:1288px;top:1513.5px;width:477px;height:11.0px;background:#20A874;border-radius:3px;"></div>
<div id="t98" class="t" style="top:1508.7px;font-size:19px;color:#1D2428;letter-spacing:-0.83px;right:724.0px;">100%</div>
<svg style="left:1128px;top:152px" width="743" height="398" viewBox="0 0 743 398"><defs><clipPath id="mc"><rect width="743" height="398" rx="3"/></clipPath></defs><g clip-path="url(#mc)"><rect width="743" height="398" fill="#ECF0F0"/><g transform="translate(0,0) scale(0.07518)"><rect width="2474" height="1330" fill="#BEC2C3"/><polygon points="0,0 260,0 0,60" fill="#E4E8E8" /><polygon points="0,90 400,0 800,0 830,40 500,110 0,200" fill="#E4E8E8" /><polygon points="0,520 420,400 560,300 740,250 880,320 600,470 420,470 240,560 0,600" fill="#E4E8E8" /><polygon points="0,600 100,600 300,680 310,740 0,830" fill="#E4E8E8" /><polygon points="200,920 660,850 680,900 330,1030" fill="#E4E8E8" /><polygon points="580,1040 940,950 1100,1000 1060,1040 900,1140 760,1150 620,1100" fill="#E4E8E8" /><polygon points="800,0 1760,0 1780,90 1380,140 1450,400 1230,490 1140,230 880,320 760,250 830,200" fill="#C6EEDC" /><polygon points="1270,640 1400,590 1800,700 1500,820 1340,780" fill="#C6EEDC" /><polygon points="1100,950 1350,880 1460,1100 1300,1200 940,1080" fill="#CDEDE0" /><polygon points="880,320 1140,230 1220,510 1060,440" fill="#A2BEB4" /><polygon points="560,90 800,80 840,220 730,230" fill="#A2BEB4" /><polygon points="1410,800 1700,760 1750,1000 1550,1050 1460,1100" fill="#A2BEB4" /><polygon points="1700,760 2140,700 2200,1000 1760,1000" fill="#A2BEB4" /><polygon points="500,1250 900,1140 1000,1330 600,1330" fill="#A2BEB4" /><polygon points="1140,1200 1500,1100 1520,1330 1100,1330" fill="#A2BEB4" /><polygon points="1380,140 1990,200 2080,600 1630,640 1500,560" fill="#C9CDCE" /><path d="M1450 160 L1560 600 M1640 190 L1760 620 M1800 200 L1900 610" stroke="#DCE0E0" stroke-width="40"/><polygon points="2150,150 2474,60 2474,640 2250,680" fill="#C5C9CA" /><polygon points="2040,360 2160,380 2200,700 2100,680" fill="#EEF2F2" /><polygon points="2140,700 2474,640 2474,760 2160,820" fill="#E4E8E8" /><polygon points="1500,1100 2474,1050 2474,1330 1600,1330" fill="#DADEDE" /><polygon points="1230,490 1450,400 1460,460 1250,580" fill="#F2F5F5" /></g><g transform="translate(186,0) scale(0.07518)"><rect width="2474" height="1330" fill="#C4C8C9"/><polygon points="0,0 780,0 640,100 200,140 0,120" fill="#D5D8D9" /><polygon points="0,150 180,140 200,380 60,460 0,450" fill="#D8F5EA" /><polygon points="630,110 1180,0 1180,160 960,300 820,400 650,370" fill="#BDC1C2" /><polygon points="960,300 1500,0 2474,0 2474,120 1880,460 1250,380" fill="#E5E8E8" /><polygon points="1240,260 1510,80 1700,110 1480,290" fill="#BFC3C4" /><polygon points="1630,320 1880,150 2120,180 1870,370" fill="#BFC3C4" /><polygon points="1250,380 1880,460 1900,780 1360,700" fill="#CDD0D1" /><polygon points="1880,460 2474,120 2474,460 1900,780" fill="#B8BCBD" /><polygon points="1370,700 1900,780 2474,460 2474,1330 1220,1330 1210,1050 1390,1030" fill="#ECF0F0" /><polygon points="0,600 460,580 520,920 260,1000 0,1010" fill="#C0C4C5" /><polygon points="80,580 340,470 580,440 600,560 440,600" fill="#E4E8E8" /><polygon points="0,1010 260,1000 650,1100 500,1170 460,1330 0,1330" fill="#E9EDED" /><polygon points="580,420 1330,500 1390,1030 1290,1040 1210,1050 700,960" fill="#CFD3D4" /><path d="M650 470 L740 960 M780 480 L860 950 M980 500 L1040 880 M1100 520 L1160 890 M1260 540 L1320 1030" stroke="#BEC2C3" stroke-width="45"/><polygon points="500,1170 1180,880 1210,1050 700,1250" fill="#E4E8E8" /><polygon points="460,1330 500,1170 700,1250 1210,1050 1220,1330" fill="#BDC1C2" /><polyline points="1380,800 2100,950" fill="none" stroke="#fff" stroke-width="22"/><polyline points="1870,1150 2474,700" fill="none" stroke="#fff" stroke-width="40"/><polygon points="1800,1200 1940,1180 1940,1330 1800,1330" fill="#B5B9BA" /></g><g transform="translate(0,100) scale(0.07518)"><rect width="2474" height="1330" fill="#ECF0F0"/><polygon points="0,1100 600,760 1750,1000 1450,1330 0,1330" fill="#E4E8E8" /><polyline points="0,450 2474,1100" fill="none" stroke="#fff" stroke-width="60"/><polyline points="1310,780 1850,510" fill="none" stroke="#fff" stroke-width="30"/><polygon points="0,0 1530,0 1610,310 1460,370 1450,430 1300,490 1200,420 950,400 770,260 580,320 430,200 180,250 0,50" fill="#BCC0C1" /><polygon points="360,0 450,0 560,270 480,240" fill="#D5D9DA" /><polygon points="700,0 820,0 940,370 860,320" fill="#D5D9DA" /><polygon points="1000,0 1100,0 1280,480 1200,420" fill="#D5D9DA" /><polygon points="580,0 1450,0 1420,60 1100,120 960,170 830,130 690,0" fill="#A2BEB4" /><polygon points="1600,140 1960,80 2474,120 2474,840 2150,750 1700,390" fill="#D0D3D4" /><polygon points="1960,80 2340,190 2474,170 2474,840 2150,750 2050,420" fill="#C4C8C9" /><polygon points="1420,1270 1770,1020 1880,1330 1410,1330" fill="#B5B9BA" /></g><g transform="translate(186,100) scale(0.07518)"><rect width="2474" height="1330" fill="#ECF0F0"/><polyline points="150,1170 1700,0" fill="none" stroke="#fff" stroke-width="45"/><polyline points="0,1100 600,1250" fill="none" stroke="#fff" stroke-width="40"/><polyline points="320,520 890,230 1290,60 1360,80" fill="none" stroke="#fff" stroke-width="18"/><polyline points="380,510 700,720" fill="none" stroke="#fff" stroke-width="18"/><polygon points="0,0 1000,0 740,120 740,260 310,450 340,680 100,780 0,350" fill="#B8BCBD" /><polygon points="0,350 100,780 0,760" fill="#D0D3D4" /><polygon points="1340,300 1600,180 2474,420 2474,700 1360,420" fill="#E4E7E8" /><polygon points="1360,420 2474,700 2474,1250 1410,1010" fill="#C9CCCD" /><polygon points="880,490 960,310 1340,300 1360,420 1170,570" fill="#E2E5E6" /><polygon points="880,490 1170,570 1240,1170 960,1080" fill="#C9CCCD" /><polygon points="1170,570 1360,420 1410,1010 1240,1170" fill="#B2B6B7" /><polygon points="1610,180 1930,0 1950,260" fill="#B5B9BA" /><polygon points="1940,40 2474,180 2474,390 1950,260" fill="#C6CACB" /><polygon points="1930,0 2474,0 2474,180 1940,40" fill="#E4E7E8" /></g><g transform="translate(371,0) scale(0.15036)"><polyline points="0,330 480,0" fill="none" stroke="#fff" stroke-width="18"/><polyline points="150,120 520,0" fill="none" stroke="#fff" stroke-width="10"/><polyline points="870,60 970,230 720,480" fill="none" stroke="#fff" stroke-width="14"/><polyline points="1020,0 1140,220 1250,420" fill="none" stroke="#fff" stroke-width="12"/><polyline points="650,140 820,140 650,300" fill="none" stroke="#fff" stroke-width="10"/><polyline points="1100,120 1560,120 1620,180" fill="none" stroke="#fff" stroke-width="10"/><polyline points="1100,190 2474,210" fill="none" stroke="#fff" stroke-width="10"/><polyline points="1440,0 1590,180" fill="none" stroke="#fff" stroke-width="10"/><polyline points="1880,200 2140,470" fill="none" stroke="#fff" stroke-width="10"/><polygon points="0,40 180,40 150,100 0,90" fill="#D3D6D7" /><polygon points="0,40 180,40 160,60 0,55" fill="#E2E5E6" /><polygon points="320,300 620,60 850,60 850,80 630,80 340,310" fill="#B8BCBD" /><polygon points="390,370 440,270 870,170 850,280 740,410 590,410 520,400" fill="#E2E5E6" /><polygon points="740,410 850,280 850,300 750,410" fill="#B8BCBD" /><polygon points="900,0 1000,0 1080,130 1080,160 1000,160" fill="#D3D6D7" /><polygon points="1560,0 1700,0 1820,130 1810,160 1700,160" fill="#D3D6D7" /><polygon points="1830,40 2474,40 2474,160 1890,130" fill="#D3D6D7" /><polygon points="1160,220 1800,220 1840,320 1530,335 1190,300" fill="#D3D6D7" /><polygon points="1160,220 1800,220 1810,250 1180,250" fill="#E2E5E6" /><polygon points="2000,250 2100,330 2100,380 2000,300" fill="#B8BCBD" /><polygon points="2420,230 2474,250 2474,300 2420,280" fill="#B8BCBD" /><polygon points="910,450 1010,330 1280,360 1470,420 1380,570 1140,520 1020,500" fill="#E2E5E6" /><polygon points="1140,510 1380,560 1390,570 1140,520" fill="#C9CCCD" /><polygon points="920,450 1000,360 1130,390 1040,470" fill="#BCD9EE" /><polygon points="1720,480 2100,480 2100,700 1720,620" fill="#E2F5EE" /><polygon points="0,500 70,430 290,440 330,430 1130,620 1580,700 2100,780 2474,860 2474,1030 2100,940 1580,830 900,690 330,510 290,510 170,480" fill="#C9CCCD" /><polygon points="0,640 170,480 330,510 900,690 2100,940 2474,1030 2474,1330 0,1330" fill="#ECF0F0" /><polygon points="0,590 80,590 900,700 2474,1040 2474,1060 900,730 0,640" fill="#E4E8E8" /><polygon points="0,620 170,620 450,990 0,980" fill="#E3E6E7" /><polygon points="620,640 900,650 890,830 620,800" fill="#C9CCCD" /><polygon points="430,830 620,640 620,800 450,990" fill="#B8BCBD" /><polygon points="0,780 220,830 160,900 0,870" fill="#C9CCCD" /><polygon points="330,940 430,830 450,990 370,980" fill="#B8BCBD" /><polygon points="720,1060 1040,860 1280,900 1180,960 920,1140 720,1100" fill="#E2E5E6" /><polygon points="720,1060 910,1100 920,1140 720,1100" fill="#C9CCCD" /><polygon points="910,1100 1040,860 1050,880 920,1140" fill="#B8BCBD" /><polygon points="1120,1030 1530,870 1850,940 1780,1230 1420,1270 1180,1210" fill="#C9CCCD" /><polygon points="1220,1000 1340,780 1520,870 1420,1130" fill="#E2E5E6" /><polygon points="1420,1130 1520,870 1850,940 1830,970 1500,930 1440,1150" fill="#C9CCCD" /><polygon points="220,1080 490,1020 470,1330 150,1330" fill="#C9CCCD" /><polygon points="220,1080 490,1020 420,1110 200,1180" fill="#E2E5E6" /><polygon points="0,1140 220,1080 150,1330 0,1330" fill="#E2E5E6" /><polygon points="540,1160 720,1160 700,1220 560,1200" fill="#D3D6D7" /><polyline points="580,1100 760,840" fill="none" stroke="#fff" stroke-width="22"/><polyline points="1010,1210 1140,950" fill="none" stroke="#fff" stroke-width="22"/><polyline points="1540,1330 1630,1060" fill="none" stroke="#fff" stroke-width="22"/><polyline points="2040,1330 2090,1040" fill="none" stroke="#fff" stroke-width="20"/><polygon points="2190,1100 2474,1150 2474,1330 2190,1330" fill="#C6EEDC" /><polygon points="2310,1150 2360,1160 2360,1330 2310,1330" fill="#BCD9EE" /><polygon points="2120,1160 2190,1130 2180,1180 2120,1170" fill="#D3D6D7" /></g><g transform="translate(0,199) scale(0.15036)"><polygon points="0,0 940,0 780,170 430,420 100,590 0,540" fill="#E2E5E6" /><polygon points="0,400 90,410 410,220 680,15 940,0 780,170 450,420 180,590 0,540" fill="#B8BCBD" /><polygon points="0,0 600,0 0,400" fill="#E3E6E6" /><polyline points="0,640 260,730 520,960 1050,540" fill="none" stroke="#fff" stroke-width="30"/><polyline points="1110,700 1300,650 1540,740" fill="none" stroke="#fff" stroke-width="26"/><polyline points="0,950 230,820" fill="none" stroke="#fff" stroke-width="26"/><polyline points="1140,120 2474,200" fill="none" stroke="#fff" stroke-width="0"/><polyline points="1500,0 2200,200" fill="none" stroke="#fff" stroke-width="26"/><polyline points="1550,240 1560,280 2100,430" fill="none" stroke="#fff" stroke-width="26"/><polygon points="240,800 820,340 1170,120 1180,280 890,520 900,590 500,930 300,950" fill="#B8BCBD" /><polygon points="1040,60 1170,60 1180,280 1060,160" fill="#E3E6E7" /><polygon points="0,1060 180,960 350,870 490,940 500,1100 280,1320 0,1330" fill="#F1ECDA" /><polygon points="60,800 170,760 350,950 200,1050" fill="#C5C3BB" opacity="0.8"/><polygon points="40,1170 200,1050 340,1150 200,1280" fill="#DDD8C6" /><polygon points="180,1240 340,1150 340,1200 200,1280" fill="#C8C3B2" /><polygon points="760,1330 1260,790 1300,960 1000,1330" fill="#B8BCBD" /><polygon points="560,1330 1100,720 1260,790 760,1330" fill="#E3E6E7" /><polygon points="390,1330 700,1030 700,1070 480,1330" fill="#B8BCBD" /><polygon points="1090,60 1270,60 1600,60 1610,120 1530,280 1180,230 1160,120" fill="#C9CCCD" /><polygon points="1200,90 1270,60 1600,60 1500,150" fill="#E2E5E6" /><polygon points="1500,150 1600,60 1610,120 1530,280" fill="#B8BCBD" /><polygon points="1600,180 2100,220 2100,340 2020,450 1600,280" fill="#C9CCCD" /><polygon points="1580,180 1650,100 2090,210 2010,320" fill="#E2E5E6" /><polygon points="2010,320 2090,220 2100,340 2020,450" fill="#B8BCBD" /><polygon points="2120,340 2474,420 2474,670 2130,540" fill="#C9CCCD" /><polygon points="1340,340 1690,370 1700,500 1590,610 1380,540" fill="#C9CCCD" /><polygon points="1340,400 1400,290 1690,370 1570,470" fill="#E2E5E6" /><polygon points="1570,470 1690,370 1700,500 1590,610" fill="#B8BCBD" /><polygon points="1080,400 1360,350 1330,440 1230,500 1100,470" fill="#E2E5E6" /><polygon points="1230,460 1360,350 1340,440 1240,520" fill="#B8BCBD" /><polygon points="950,640 1060,520 1250,540 1080,720" fill="#E2E5E6" /><polygon points="950,640 1070,690 1080,720 960,680" fill="#C9CCCD" /><polygon points="1080,690 1250,540 1250,570 1080,720" fill="#B8BCBD" /><polygon points="1490,830 1620,720 1810,830 1820,950 1760,1070 1520,970" fill="#C9CCCD" /><polygon points="1490,830 1620,720 1810,830 1730,920" fill="#E2E5E6" /><polygon points="1730,920 1810,830 1820,950 1760,1070" fill="#B8BCBD" /><polygon points="1910,690 2000,580 2190,600 2190,700 2080,880 1920,820" fill="#C9CCCD" /><polygon points="1910,690 2000,580 2190,600 2060,740" fill="#E2E5E6" /><polygon points="2060,740 2190,600 2190,700 2080,880" fill="#B8BCBD" /><polygon points="1870,1000 1960,870 2260,980 2270,1120 2180,1270 1890,1150" fill="#C9CCCD" /><polygon points="1870,1000 1960,870 2260,980 2170,1120" fill="#E2E5E6" /><polygon points="2170,1120 2260,980 2270,1120 2180,1270" fill="#B8BCBD" /><polygon points="1410,1020 2000,1290 2000,1330 1170,1330" fill="#C6EEDC" /><polygon points="2350,1060 2474,1040 2474,1330 2350,1330" fill="#C9CCCD" /><polygon points="1700,730 1790,690 1860,700 1790,770" fill="#D3D6D7" /></g><g transform="translate(371,199) scale(0.15036)"><polygon points="330,170 360,0 1650,0 1650,250 1460,230 1380,520 330,200" fill="#E2E5E6" /><polygon points="330,170 1380,470 1370,520 330,210" fill="#C9CCCD" /><polygon points="1460,200 1640,250 1630,290 1460,240" fill="#C9CCCD" /><polygon points="1750,0 2000,0 1980,90 1750,30" fill="#C9CCCD" /><polygon points="2180,0 2474,0 2474,210 2180,140" fill="#C6EEDC" /><polygon points="2310,0 2360,0 2360,130 2310,120" fill="#BCD9EE" /><polygon points="0,0 140,0 140,150 0,200" fill="#C6CACB" /><polygon points="200,0 420,0 360,70 200,60" fill="#B8BCBD" /><polyline points="0,290 940,590 2474,1080" fill="none" stroke="#fff" stroke-width="30"/><polyline points="1520,760 1700,60" fill="none" stroke="#fff" stroke-width="40"/><polyline points="2040,140 2060,0" fill="none" stroke="#fff" stroke-width="40"/><polyline points="820,1060 990,620" fill="none" stroke="#fff" stroke-width="40"/><polyline points="1260,1330 1410,770" fill="none" stroke="#fff" stroke-width="40"/><polygon points="1690,170 2474,370 2474,880 1610,590" fill="#E5E8E9" /><polygon points="1610,590 2474,830 2474,880 1610,620" fill="#C9CCCD" /><polygon points="0,270 940,580 870,760 0,460" fill="#E3E6E7" /><polygon points="0,460 870,760 830,960 0,670" fill="#C9CCCD" /><polygon points="850,880 1700,1140 1760,880 950,620" fill="#E3E6E7" /><polygon points="850,880 1760,1140 1760,1180 840,930" fill="#C9CCCD" /><polygon points="1700,1140 1760,880 1750,960 1700,1180" fill="#B8BCBD" /><polygon points="0,730 380,880 300,1330 0,1330" fill="#E3E6E7" /><polygon points="360,1040 560,1120 550,1330 350,1330" fill="#C9CCCD" /><polygon points="550,1120 640,930 620,1050 550,1330" fill="#B8BCBD" /><polygon points="360,1040 460,850 640,930 560,1120" fill="#E2E5E6" /><polygon points="1760,1140 2474,1330 1700,1330" fill="#C9CCCD" /></g><rect x="428" y="372" width="315" height="26" fill="#F4F6F6" opacity="0.85"/><text x="436" y="390.5" font-family="Liberation Sans" font-size="15" fill="#333" textLength="283" lengthAdjust="spacingAndGlyphs">© MapTiler © OpenStreetMap contribut</text><circle cx="727.5" cy="387" r="9.5" fill="#000"/><rect x="726" y="384.5" width="3" height="8" fill="#fff"/><circle cx="727.5" cy="381" r="1.7" fill="#fff"/><path d="M372 171 C359 171 349 181 349 193 C349 207 372 229 372 229 C372 229 395 207 395 193 C395 181 385 171 372 171 Z" fill="#5ECBD4" opacity="0.85"/><circle cx="372" cy="193" r="7.5" fill="#BFC3C4"/></g></svg>
<div style="position:absolute;left:1815px;top:165.5px;width:43px;height:130px;background:#fff;border-radius:5px;box-shadow:0 0 0 1.5px rgba(0,0,0,0.06),0 1px 3px rgba(0,0,0,0.08);"></div>
<div style="position:absolute;left:1815px;top:208px;width:43px;height:1.5px;background:#E6E8EA;"></div>
<div style="position:absolute;left:1815px;top:251.5px;width:43px;height:1.5px;background:#E6E8EA;"></div>
<svg style="left:1826px;top:176px" width="22" height="22" viewBox="0 0 22 22"><path d="M11 2.5 V19.5 M2.5 11 H19.5" stroke="#333" stroke-width="2.8"/></svg>
<svg style="left:1826px;top:227px" width="22" height="6" viewBox="0 0 22 6"><path d="M2.5 3 H19.5" stroke="#333" stroke-width="2.8"/></svg>
<svg style="left:1825px;top:266px" width="24" height="18" viewBox="0 0 24 18"><polygon points="0.5,0.5 12,5 9,12" fill="#333"/><polygon points="12,5 23.5,14 9,12" fill="#A9AFC2"/><circle cx="10.8" cy="8.2" r="2" fill="#fff"/></svg>
</body></html>
